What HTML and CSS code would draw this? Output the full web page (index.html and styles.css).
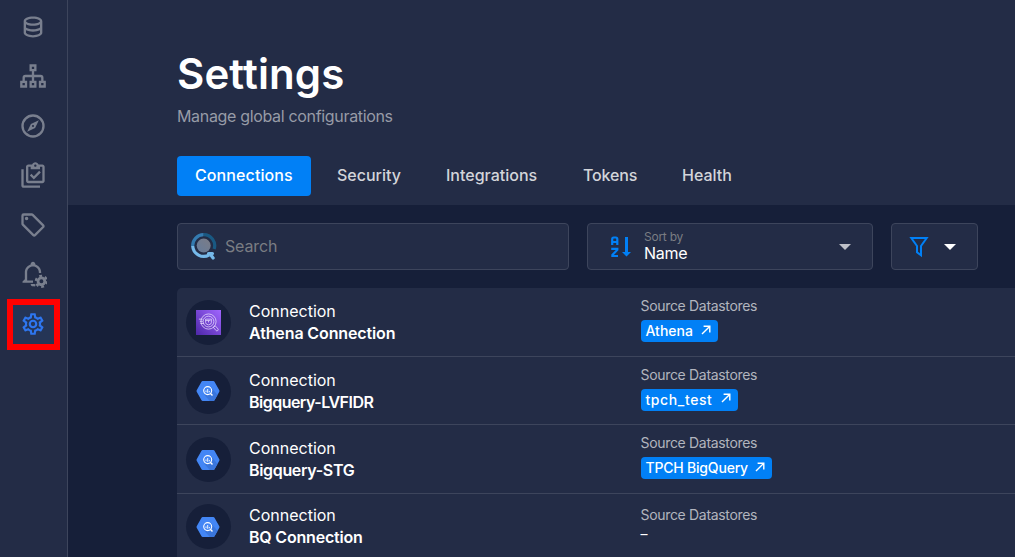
FILE: index.html
```
<!DOCTYPE html>
<html lang="en">
<head>
<meta charset="utf-8">
<title>Settings</title>
<link rel="stylesheet" href="styles.css">
</head>
<body>
<svg class="defs" aria-hidden="true">
  <defs>
    <linearGradient id="purple" x1="0" y1="1" x2="1" y2="0"><stop offset="0" stop-color="#4d27a8"/><stop offset="1" stop-color="#a166ff"/></linearGradient>
    <linearGradient id="lens" x1="0" y1="1" x2="1" y2="0"><stop offset="0" stop-color="#667c9b"/><stop offset="1" stop-color="#7b7c86"/></linearGradient>
    <symbol id="bigquery" viewBox="0 0 24 22">
      <path fill="#4386f5" d="M6.700 1h10.600q.8 0 1.200.7l4.800 8.600q.4.700 0 1.400l-4.800 8.600q-.4.700-1.200.7H6.700q-.8 0-1.200-.7L.7 11.700q-.4-.7 0-1.400l4.800-8.600q.4-.7 1.200-.7z"/>
      <path fill="#3a76dc" d="M15 7l6.500 8-3 5.300q-.4.700-1.200.7h-3.500L8.500 15z"/>
      <circle cx="11.700" cy="10.600" r="4" fill="#4386f5" stroke="#fff" stroke-width="1.100"/>
      <path stroke="#fff" stroke-width=".9" fill="none" d="M10 10.500v1.700M11.700 9v3.800M13.300 11v1.300"/>
      <path stroke="#fff" stroke-width="1.500" d="M14.500 13.500l2 2"/>
    </symbol>
    <symbol id="arrow" viewBox="0 0 10 10"><path d="M1 9L8.600 1.400M2.600 1.200h6.200v6.200" fill="none" stroke="#fff" stroke-width="1.400"/></symbol>
  </defs>
</svg>
<div class="app">
  <nav class="sidebar">
    <svg class="nav-icon" viewBox="0 0 24 24"><path d="M12 3C7.580 3 4 4.790 4 7V17C4 19.210 7.590 21 12 21S20 19.210 20 17V7C20 4.790 16.420 3 12 3M18 17C18 17.500 15.870 19 12 19S6 17.500 6 17V14.770C7.610 15.550 9.720 16 12 16S16.390 15.550 18 14.770V17M18 12.450C16.700 13.400 14.420 14 12 14C9.580 14 7.300 13.400 6 12.450V9.640C7.470 10.470 9.610 11 12 11C14.390 11 16.530 10.470 18 9.640V12.450M12 9C8.130 9 6 7.500 6 7S8.130 5 12 5C15.870 5 18 6.500 18 7S15.870 9 12 9Z"/></svg>
    <svg class="nav-icon line" viewBox="0 0 24 24"><path d="M10 3h4v4h-4zM2 17h4v4H2zM10 17h4v4h-4zM18 17h4v4h-4zM12 8v8M4 16v-2.500q0-1.500 1.500-1.500h13q1.500 0 1.500 1.500V16"/></svg>
    <svg class="nav-icon" viewBox="0 0 24 24"><path d="M7,17L10.200,10.200L17,7L13.800,13.800L7,17M12,11.100A0.900,0.900 0 0,0 11.100,12A0.900,0.900 0 0,0 12,12.900A0.900,0.900 0 0,0 12.900,12A0.900,0.900 0 0,0 12,11.100M12,2A10,10 0 0,1 22,12A10,10 0 0,1 12,22A10,10 0 0,1 2,12A10,10 0 0,1 12,2M12,4A8,8 0 0,0 4,12A8,8 0 0,0 12,20A8,8 0 0,0 20,12A8,8 0 0,0 12,4Z"/></svg>
    <svg class="nav-icon" viewBox="0 0 24 24"><path d="M4 7V21H18V23H4C2.900 23 2 22.100 2 21V7H4M20 3H16.800C16.400 1.800 15.300 1 14 1S11.600 1.800 11.200 3H8C6.900 3 6 3.900 6 5V17C6 18.100 6.900 19 8 19H20C21.100 19 22 18.100 22 17V5C22 3.900 21.100 3 20 3M14 3C14.600 3 15 3.400 15 4S14.600 5 14 5 13 4.600 13 4 13.400 3 14 3M20 17H8V5H10V7H18V5H20V17M18.700 9.800l-1.400-1.400-4.600 4.600-2-2-1.400 1.400 3.400 3.400z"/></svg>
    <svg class="nav-icon" viewBox="0 0 24 24"><path d="M21.410 11.580L12.410 2.580A2 2 0 0 0 11 2H4A2 2 0 0 0 2 4V11A2 2 0 0 0 2.590 12.420L11.590 21.420A2 2 0 0 0 13 22A2 2 0 0 0 14.410 21.410L21.410 14.410A2 2 0 0 0 22 13A2 2 0 0 0 21.410 11.580M13 20L4 11V4H11L20 13M6.500 5A1.500 1.500 0 1 1 5 6.500A1.500 1.500 0 0 1 6.500 5Z"/></svg>
    <svg class="nav-icon" viewBox="0 0 24 24"><path d="M12 1.500c-1.100 0-2 .9-2 2v.3C7 4.700 5 7.400 5 10.500v6l-2 2v1h9v-2H7v-7c0-2.800 2.200-5 5-5s5 2.200 5 5v.6h2v-.6c0-3.100-2-5.800-5-6.700v-.3c0-1.100-.9-2-2-2M10 20.500h3.500l.8 1.800c-.7.400-1.500.4-2.300.2-1.200 0-2-.9-2-2z"/><circle cx="19.200" cy="18.300" r="2.900" fill="none" stroke="#797f8e" stroke-width="2.400"/><circle cx="19.200" cy="18.300" r="4.700" fill="none" stroke="#797f8e" stroke-width="2" stroke-dasharray="2.460 2.460"/></svg>
    <div class="active-item"><svg class="nav-icon active" viewBox="0 0 24 24"><path d="M12,8A4,4 0 0,1 16,12A4,4 0 0,1 12,16A4,4 0 0,1 8,12A4,4 0 0,1 12,8M12,10A2,2 0 0,0 10,12A2,2 0 0,0 12,14A2,2 0 0,0 14,12A2,2 0 0,0 12,10M10,22C9.750,22 9.540,21.820 9.500,21.580L9.130,18.930C8.500,18.680 7.960,18.340 7.440,17.940L4.950,18.950C4.730,19.030 4.460,18.950 4.340,18.730L2.340,15.270C2.210,15.050 2.270,14.780 2.460,14.630L4.570,12.970L4.500,12L4.570,11L2.460,9.370C2.270,9.220 2.210,8.950 2.340,8.730L4.340,5.270C4.460,5.050 4.730,4.960 4.950,5.050L7.440,6.050C7.960,5.660 8.500,5.320 9.130,5.070L9.500,2.420C9.540,2.180 9.750,2 10,2H14C14.250,2 14.460,2.180 14.500,2.420L14.870,5.070C15.500,5.320 16.040,5.660 16.560,6.050L19.050,5.050C19.270,4.960 19.540,5.050 19.660,5.270L21.660,8.730C21.790,8.950 21.730,9.220 21.540,9.370L19.430,11L19.500,12L19.430,13L21.540,14.630C21.730,14.780 21.790,15.050 21.660,15.270L19.660,18.730C19.540,18.950 19.270,19.040 19.050,18.950L16.560,17.950C16.040,18.340 15.500,18.680 14.870,18.930L14.500,21.580C14.460,21.820 14.250,22 14,22H10M11.250,4L10.880,6.610C9.680,6.860 8.620,7.500 7.850,8.390L5.440,7.350L4.690,8.650L6.800,10.200C6.400,11.370 6.400,12.640 6.800,13.800L4.680,15.360L5.430,16.660L7.860,15.620C8.630,16.500 9.680,17.140 10.870,17.380L11.240,20H12.760L13.130,17.390C14.320,17.140 15.370,16.500 16.140,15.620L18.570,16.660L19.320,15.360L17.200,13.810C17.600,12.640 17.600,11.370 17.200,10.200L19.310,8.650L18.560,7.350L16.150,8.390C15.380,7.500 14.320,6.860 13.120,6.620L12.750,4H11.250Z"/></svg></div>
  </nav>
  <div class="page">
    <header class="header">
      <h1 class="title">Settings</h1>
      <p class="subtitle">Manage global configurations</p>
      <div class="tabs">
        <a class="tab selected">Connections</a>
        <a class="tab security">Security</a>
        <a class="tab integrations">Integrations</a>
        <a class="tab tokens">Tokens</a>
        <a class="tab health">Health</a>
      </div>
    </header>
    <main class="content">
      <div class="toolbar">
        <div class="field search">
          <svg class="search-icon" viewBox="0 0 26 28"><g fill="none" stroke-width="3.200"><path stroke="#195983" d="M12.500 2.600a11 11 0 0 1 10.600 14.500"/><path stroke="#347bb0" d="M12.500 2.600A11 11 0 0 0 1.700 14"/><path stroke="#76b9ea" d="M1.700 14a11 11 0 0 0 16.600 8.800"/></g><path d="M17.500 21.500h4M19.500 22.500l2.600 3.500" stroke="#76b9ea" stroke-width="3.200" stroke-linecap="round"/><circle cx="12.700" cy="13.600" r="7" fill="url(#lens)"/></svg>
          <span class="search-text">Search</span>
        </div>
        <div class="field sort">
          <svg class="sort-icon" viewBox="0 0 20 22"><path d="M1.200 9V3q0-1.500 1.500-1.500h2.100q1.500 0 1.500 1.500v6M1.200 6h5M.2 12.900h6.100v1L1.400 19v1h5.600" fill="none" stroke="#0180f6" stroke-width="2.200"/><path d="M14 1h3v15h3l-4.500 4.500L11 16h3z" fill="#0180f6"/></svg>
          <span class="sort-labels"><span class="sort-by">Sort by</span><span class="sort-name">Name</span></span>
          <span class="caret"></span>
        </div>
        <div class="field filter">
          <svg class="filter-icon" viewBox="0 0 20 22"><path d="M2.300 2h15.400L12 10v9.300l-4-3.100V10z" fill="none" stroke="#0180f6" stroke-width="2"/></svg>
          <span class="caret white"></span>
        </div>
      </div>
      <div class="list">
        <div class="row">
          <span class="avatar"><svg class="athena" viewBox="0 0 26 26"><path fill="url(#purple)" d="M0 0h26v26H0z"/><g fill="none" stroke="#e9ddff" stroke-width=".8"><circle cx="13" cy="12" r="7.900"/><circle cx="13" cy="12" r="5.600"/><path d="M10 9.500h6v3.500q0 2-3 2.500-3-.5-3-2.500zM10 11h5M13 11v2M3 9.500h4M4 11.800h3M4.500 14h4M18 18l2-1.600 3 3.400q.5 1-.5 1.700-1 .5-1.600-.1z"/></g></svg></span>
          <div class="name"><span class="kind">Connection</span><strong class="n1">Athena Connection</strong></div>
          <div class="stores"><span class="label">Source Datastores</span><a class="chip c1"><span>Athena</span><svg><use href="#arrow"/></svg></a></div>
        </div>
        <div class="row">
          <span class="avatar"><svg class="bq"><use href="#bigquery"/></svg></span>
          <div class="name"><span class="kind">Connection</span><strong class="n2">Bigquery-LVFIDR</strong></div>
          <div class="stores"><span class="label">Source Datastores</span><a class="chip c2"><span>tpch_test</span><svg><use href="#arrow"/></svg></a></div>
        </div>
        <div class="row">
          <span class="avatar"><svg class="bq"><use href="#bigquery"/></svg></span>
          <div class="name"><span class="kind">Connection</span><strong class="n3">Bigquery-STG</strong></div>
          <div class="stores"><span class="label">Source Datastores</span><a class="chip c3"><span>TPCH BigQuery</span><svg><use href="#arrow"/></svg></a></div>
        </div>
        <div class="row last">
          <span class="avatar"><svg class="bq"><use href="#bigquery"/></svg></span>
          <div class="name"><span class="kind">Connection</span><strong class="n4">BQ Connection</strong></div>
          <div class="stores"><span class="label">Source Datastores</span><span class="none">–</span></div>
        </div>
      </div>
    </main>
  </div>
</div>
</body>
</html>
```
FILE: styles.css
```
* { box-sizing: border-box; }
body { margin: 0; background: #161f39; color: #fff; font-family: Inter, "Liberation Sans", sans-serif; overflow: hidden; }
.defs { position: absolute; width: 0; height: 0; }
.app { display: flex; height: 557px; white-space: nowrap; }
.sidebar { flex: none; width: 68px; background: #232c46; border-right: 1px solid #3d455c; display: flex; flex-direction: column; align-items: center; gap: 21.500px; padding: 12.500px 1px 0 0; }
.nav-icon { display: block; flex: none; width: 28px; height: 28px; fill: #797f8e; fill-rule: evenodd; }
.nav-icon.line { fill: none; stroke: #797f8e; stroke-width: 2; }
.active-item { width: 53px; height: 51px; margin: -11px 0 -12px 1px; border: 6px solid #f00; background: #253556; display: flex; align-items: center; justify-content: center; }
.nav-icon.active { fill: #2e76ef; width: 26px; height: 26px; margin-right: 1px; }
.page { flex: 1; min-width: 0; }
.header { height: 205px; background: #232c46; padding: 47px 0 0 109px; }
.title { margin: 0; font-size: 42px; line-height: 54px; font-weight: 600; letter-spacing: .1px; }
.subtitle { margin: 4px 0 0; font-size: 16px; line-height: 22px; color: #979ba7; letter-spacing: -.33px; }
.tabs { display: flex; margin-top: 29px; gap: 9px; }
.tab { height: 40px; padding: 0 18px; border-radius: 4px; font-size: 16px; line-height: 39px; font-weight: 500; color: #d3d5da; }
.tab.selected { background: #0180f6; color: #fff; width: 134px; letter-spacing: .1px; }
.tab.security { width: 100px; margin-left: -1px; }
.tab.integrations { width: 128px; }
.tab.tokens { width: 90px; letter-spacing: -.15px; }
.content { padding: 18px 0 0 109px; }
.toolbar { display: flex; gap: 18px; }
.field { height: 47px; border: 1px solid #3d455c; border-radius: 4px; background: #232c46; display: flex; align-items: center; }
.search { width: 392px; padding-left: 13px; }
.search-icon { width: 26px; height: 28px; margin-top: -1px; }
.search-text { margin: -2px 0 0 8px; font-size: 16px; letter-spacing: -.15px; color: #7a7d83; }
.sort { width: 286px; padding: 0 21px 0 23px; }
.sort-icon { width: 20px; height: 22px; }
.sort-labels { display: flex; flex-direction: column; margin: -2px auto 0 13px; }
.sort-by { font-size: 12px; line-height: 15px; color: #7a7d83; letter-spacing: -.25px; }
.sort-name { font-size: 16px; line-height: 18px; letter-spacing: -.3px; }
.caret { border: 6px solid transparent; border-top-color: #bec0c8; border-bottom: 0; }
.caret.white { border-top-color: #fff; }
.filter { width: 87px; padding: 0 21px 0 17px; justify-content: space-between; }
.filter-icon { width: 20px; height: 22px; }
.list { margin-top: 18px; background: #232c46; border-top-left-radius: 5px; }
.row { display: flex; height: 68.500px; border-bottom: 1px solid #3d455c; padding: 12px 0 0 9px; }
.row.last { height: 72px; border: 0; padding-top: 10.500px; }
.avatar { flex: none; width: 45px; height: 45px; border-radius: 50%; background: #161f39; display: flex; align-items: center; justify-content: center; }
.athena { width: 25px; height: 25px; }
.bq { width: 24px; height: 22px; margin-right: 1px; }
.name { display: flex; flex-direction: column; width: 409.500px; padding-left: 18px; font-size: 16px; line-height: 22px; }
.name strong { font-weight: 600; }
.n1 { letter-spacing: -.12px; }
.n2 { letter-spacing: -.52px; }
.n3 { letter-spacing: -.33px; }
.n4 { letter-spacing: -.2px; }
.stores { display: flex; flex-direction: column; align-items: flex-start; margin-top: -3px; }
.label { font-size: 14px; line-height: 18px; color: #b2b5be; letter-spacing: -.32px; }
.chip { display: flex; align-items: center; justify-content: space-between; height: 22px; margin-top: 5px; padding: 0 7px 0 5px; border-radius: 4px; background: #0180f6; font-size: 14px; font-weight: 500; }
.chip span { margin-top: -1px; }
.chip svg { width: 10px; height: 10px; margin-bottom: 3px; }
.c1 { width: 77px; }
.c2 { width: 97px; letter-spacing: .6px; }
.c3 { width: 131px; letter-spacing: -.2px; }
.last .stores { margin-top: 2px; }
.none { font-size: 14px; line-height: 20px; }
```
